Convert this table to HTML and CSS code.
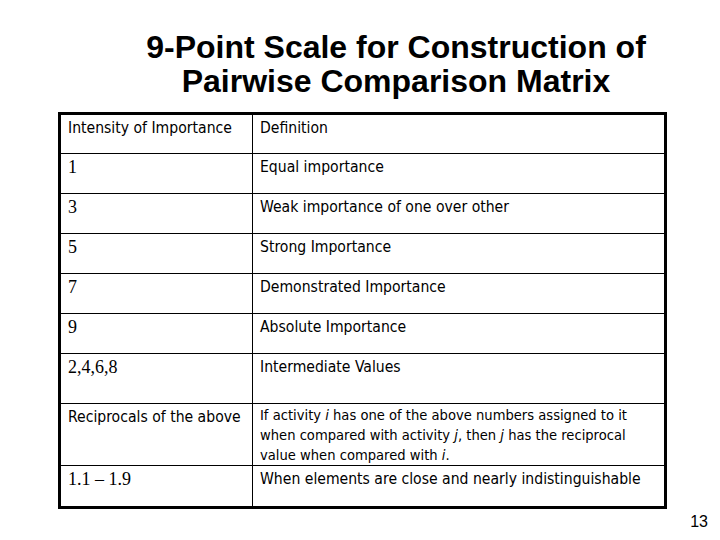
FILE: index.html
```html
<!DOCTYPE html>
<html>
<head>
<meta charset="utf-8">
<link rel="stylesheet" href="styles.css">
</head>
<body>
<div class="slide">
  <h1 class="title">9-Point Scale for Construction of<br>Pairwise Comparison Matrix</h1>
  <table class="scale">
    <tr class="r40"><td class="c1">Intensity of Importance</td><td>Definition</td></tr>
    <tr class="r40"><td class="c1 num">1</td><td>Equal importance</td></tr>
    <tr class="r40"><td class="c1 num">3</td><td>Weak importance of one over other</td></tr>
    <tr class="r40"><td class="c1 num">5</td><td>Strong Importance</td></tr>
    <tr class="r40"><td class="c1 num">7</td><td>Demonstrated Importance</td></tr>
    <tr class="r40"><td class="c1 num">9</td><td>Absolute Importance</td></tr>
    <tr class="r50"><td class="c1 num">2,4,6,8</td><td>Intermediate Values</td></tr>
    <tr class="r62"><td class="c1">Reciprocals of the above</td><td class="multi">If activity <i>i</i> has one of the above numbers assigned to it<br>when compared with activity <i>j</i>, then <i>j</i> has the reciprocal<br>value when compared with <i>i</i>.</td></tr>
    <tr class="r42"><td class="c1 num">1.1 – 1.9</td><td>When elements are close and nearly indistinguishable</td></tr>
  </table>
  <div class="page">13</div>
</div>
</body>
</html>
```
FILE: styles.css
```css
html, body {
  margin: 0;
  padding: 0;
  background: #fff;
}
.slide {
  width: 720px;
  height: 540px;
  overflow: hidden;
  color: #000;
}
.title {
  margin: 30px 0 0 72px;
  font-family: "Liberation Sans", Arial, sans-serif;
  font-weight: bold;
  font-size: 32px;
  line-height: 34px;
  text-align: center;
}
.scale {
  margin: 14px 0 0 58px;
  width: 609px;
  border-collapse: collapse;
  border: 3px solid #000;
  table-layout: fixed;
  font-family: "DejaVu Sans Condensed", "DejaVu Sans", sans-serif;
  font-size: 15.6px;
  line-height: 21px;
}
.scale td {
  border: 1px solid #000;
  vertical-align: top;
  padding: 3px 8px 0 7px;
}
.scale .c1 {
  width: 176px;
}
.scale .num {
  font-family: "Liberation Serif", "Times New Roman", serif;
  font-size: 18px;
}
.scale .multi {
  font-size: 14.6px;
  line-height: 20px;
  padding-top: 1px;
}
.r40 { height: 40px; }
.r50 { height: 50px; }
.r62 { height: 62px; }
.r42 { height: 42px; }
.page {
  margin-top: 4px;
  padding-right: 12px;
  text-align: right;
  font-family: "Liberation Sans", Arial, sans-serif;
  font-size: 16px;
}
```
